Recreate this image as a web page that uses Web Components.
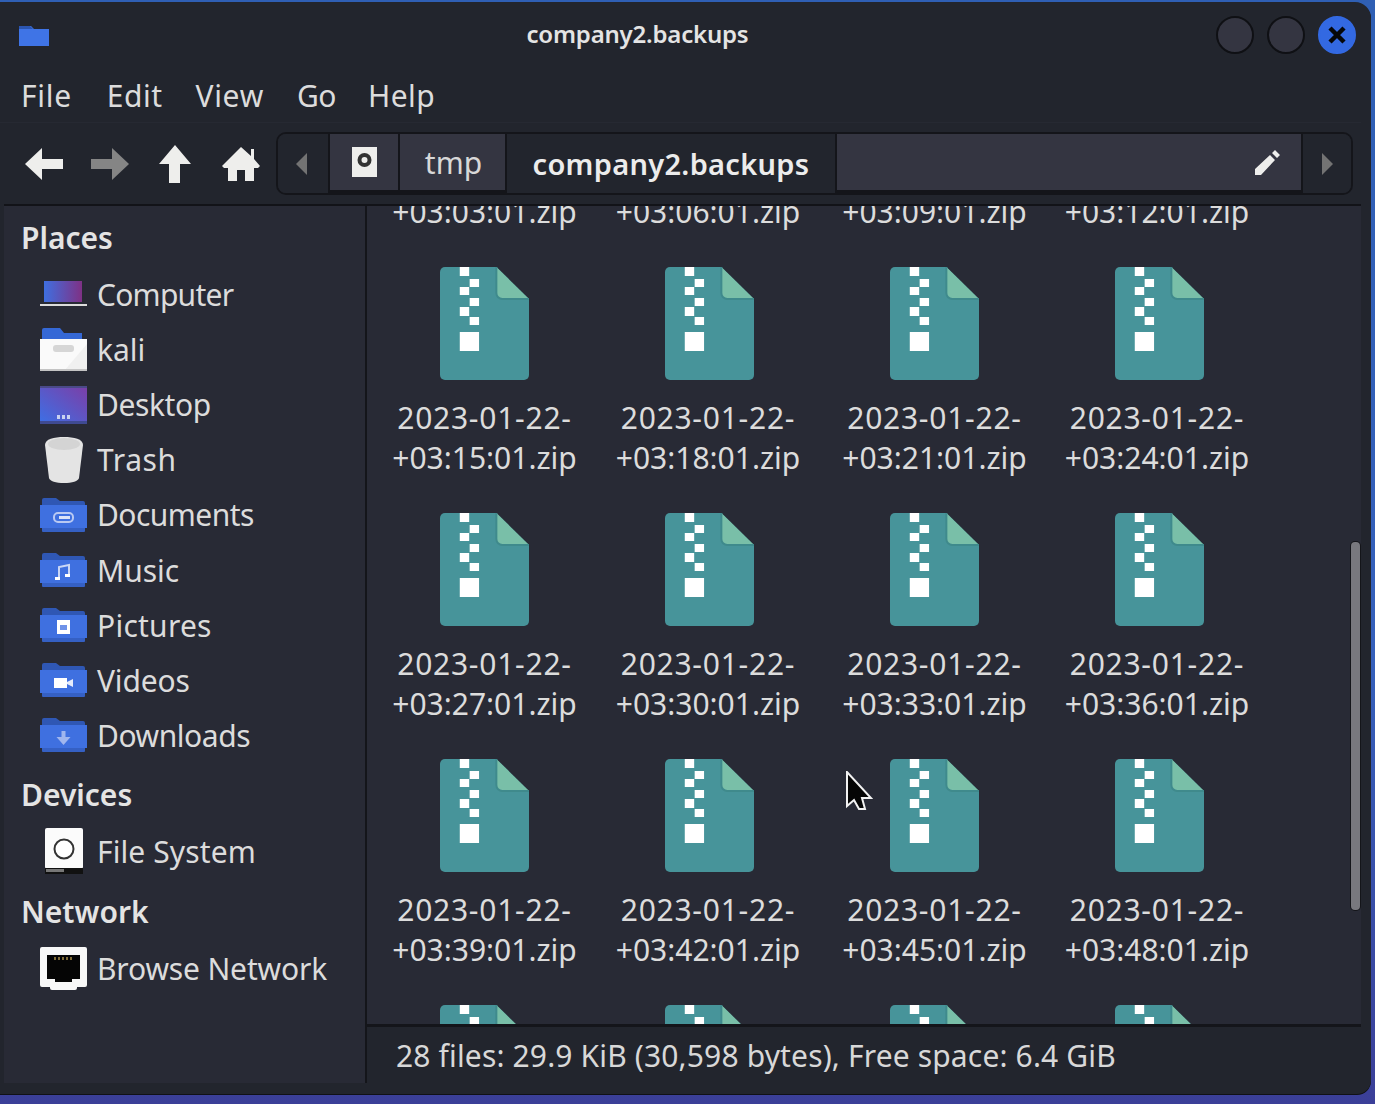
<!DOCTYPE html>
<html>
<head>
<meta charset="utf-8">
<title>company2.backups</title>
<style>
html,body{margin:0;padding:0;height:100%;}
body{
  width:1375px;height:1104px;overflow:hidden;
  background:linear-gradient(180deg,#2f5fb4 0,#3560bb 60%,#3b3f98 100%);
  font-family:"Noto Sans",sans-serif;
  color:#dfdfdf;
}
</style>
</head>
<body>
<fm-window>
  <fm-titlebar slot="top">company2.backups</fm-titlebar>
  <fm-menubar slot="top"></fm-menubar>
  <fm-toolbar slot="top"></fm-toolbar>
  <fm-sidebar slot="side">
    <fm-heading>Places</fm-heading>
    <fm-place icon="computer" style="letter-spacing:-.75px">Computer</fm-place>
    <fm-place icon="home">kali</fm-place>
    <fm-place icon="desktop" style="letter-spacing:-.4px">Desktop</fm-place>
    <fm-place icon="trash" style="letter-spacing:.6px">Trash</fm-place>
    <fm-place icon="documents" style="letter-spacing:-.55px">Documents</fm-place>
    <fm-place icon="music">Music</fm-place>
    <fm-place icon="pictures" style="letter-spacing:.25px">Pictures</fm-place>
    <fm-place icon="videos" style="letter-spacing:-.15px">Videos</fm-place>
    <fm-place icon="downloads" style="letter-spacing:-.45px">Downloads</fm-place>
    <fm-heading>Devices</fm-heading>
    <fm-place icon="disk" style="letter-spacing:.1px">File System</fm-place>
    <fm-heading style="margin-top:13.500px">Network</fm-heading>
    <fm-place icon="network" style="letter-spacing:-.15px">Browse Network</fm-place>
  </fm-sidebar>
  <fm-files slot="main"></fm-files>
  <fm-status slot="main">28 files: 29.9 KiB (30,598 bytes), Free space: 6.4 GiB</fm-status>
</fm-window>

<script>
// folder body shared by the xdg dirs, glyph goes on top
const folder = (glyph) => `<svg width="47" height="34" viewBox="0 0 47 34">
  <path d="M2 2a2 2 0 0 1 2-2h12l4 3h23a2 2 0 0 1 2 2v4H2z" fill="#2f57b4"/>
  <path d="M0 7h47v23H0z" fill="#3f70e0"/>
  <path d="M2 30h43v3a1 1 0 0 1-1 1H3a1 1 0 0 1-1-1z" fill="#3560c4"/>
  ${glyph}</svg>`;

const icons = {
  computer: `<svg width="47" height="27" viewBox="0 0 47 27">
    <defs><linearGradient id="lap" x1="0" x2="1" y1="0" y2="0"><stop offset="0" stop-color="#3f6fe0"/><stop offset="1" stop-color="#7f3185"/></linearGradient></defs>
    <rect x="4" y="0" width="38" height="21" fill="url(#lap)"/>
    <rect x="0" y="23" width="47" height="2" fill="#dcdcdc"/></svg>`,
  home: `<svg width="47" height="43" viewBox="0 0 47 43">
    <path d="M2 2a2 2 0 0 1 2-2h16l4 5h18v8H2z" fill="#3568d6"/>
    <rect x="0" y="11" width="47" height="32" fill="#fafafa"/>
    <path d="M24 43L47 16v27z" fill="#f0f0f0"/>
    <rect x="0" y="41" width="47" height="2" fill="#c4c4c4"/>
    <rect x="13" y="17" width="21" height="7" rx="3" fill="#d6d6d6"/></svg>`,
  desktop: `<svg width="47" height="38" viewBox="0 0 47 38">
    <defs><linearGradient id="desk" x1="0" x2="1" y1="1" y2="0"><stop offset="0" stop-color="#3c70e6"/><stop offset="1" stop-color="#7c3ea6"/></linearGradient></defs>
    <rect width="47" height="38" fill="url(#desk)"/>
    <rect y="0" width="47" height="2" fill="#4a4a88"/>
    <rect y="35" width="47" height="3" fill="#3f4a92"/>
    <path d="M17 29h3v4h-3zM22 29h3v4h-3zM27 29h3v4h-3z" fill="#c9d2f0"/></svg>`,
  trash: `<svg width="38" height="46" viewBox="0 0 38 46">
    <path d="M0 8C0 2 9 0 19 0s19 2 19 8l-4 33c-.5 3-7 5-15 5s-14.500-2-15-5z" fill="#e4e4e4"/>
    <ellipse cx="19" cy="7" rx="16" ry="6" fill="#d4d4d4"/></svg>`,
  documents: folder(`<rect x="14" y="15" width="19" height="9" rx="4" fill="none" stroke="#b9c9f2" stroke-width="2"/><rect x="19" y="18" width="11" height="3" fill="#dbe3f8"/>`),
  music: folder(`<path d="M19 25V14l10-2v10" fill="none" stroke="#c9d6f5" stroke-width="2"/><rect x="15" y="24" width="5" height="3" fill="#fff"/><rect x="25" y="21" width="5" height="3" fill="#fff"/>`),
  pictures: folder(`<rect x="17" y="12" width="13" height="14" fill="#fff"/><rect x="20" y="17" width="7" height="5" fill="#6f92e8"/>`),
  videos: folder(`<rect x="14" y="15" width="13" height="10" fill="#fff"/><path d="M27 19l6-3v8l-6-3z" fill="#e6ecfb"/>`),
  downloads: folder(`<path d="M21.500 13h4v6h5l-7 8-7-8h5z" fill="#a0b6ee"/>`),
  disk: `<svg width="38" height="46" viewBox="0 0 38 46">
    <rect width="38" height="41" rx="2" fill="#fbfbfb"/>
    <rect x="0" y="40" width="38" height="6" fill="#111"/>
    <rect x="1" y="41" width="18" height="3" fill="#777"/>
    <circle cx="19" cy="21" r="9.500" fill="#fff" stroke="#333" stroke-width="2"/></svg>`,
  network: `<svg width="47" height="43" viewBox="0 0 47 43">
    <path d="M2 0h43a2 2 0 0 1 2 2v36a2 2 0 0 1-2 2H37v1a2 2 0 0 1-2 2H12a2 2 0 0 1-2-2v-1H2a2 2 0 0 1-2-2V2a2 2 0 0 1 2-2z" fill="#f8f8f8"/>
    <path d="M7 8h33v24h-8v3H15v-3H7z" fill="#050505"/>
    <path d="M15 10v3M19 10v3M23 10v3M27 10v3M31 10v3" stroke="#a98f48" stroke-width="1.500"/></svg>`
};

class FmWindow extends HTMLElement {
  constructor() {
    super();
    this.attachShadow({ mode: "open" }).innerHTML = `<style>
      :host{
        display:flex;flex-direction:column;
        width:1371px;height:1092px;margin-top:2px;
        background:#22252d;
        border-radius:0 16px 14px 0;
        box-shadow:0 1px 0 #101116;
      }
      .body{display:flex;flex:1;min-height:0;margin:0 10px 11px 4px;}
      .main{display:flex;flex-direction:column;flex:1;min-width:0;position:relative;}
    </style>
    <slot name="top"></slot>
    <div class="body">
      <slot name="side"></slot>
      <div class="main"><slot name="main"></slot></div>
    </div>`;
  }
}

class FmTitlebar extends HTMLElement {
  constructor() {
    super();
    this.attachShadow({ mode: "open" }).innerHTML = `<style>
      :host{display:flex;align-items:center;height:66px;padding:0 15px 0 19px;box-sizing:border-box;}
      svg{flex:none;}
      .title{flex:1;text-align:center;font-size:24px;line-height:30px;margin:-2px 9px 0 32px;font-weight:600;letter-spacing:-.2px;color:#e4e4e4;}
      .btn{flex:none;width:34px;height:34px;border-radius:50%;background:#343541;border:2px solid #0f1014;margin-left:13px;}
      .close{background:#3369e2;border-color:#3369e2;display:flex;align-items:center;justify-content:center;}
    </style>
    <svg width="30" height="22" viewBox="0 0 30 22"><path d="M0 2h12l3 3h15v17H0z" fill="#3f74e6"/><path d="M0 2h11l3 3H0z" fill="#2b55b0"/></svg>
    <div class="title"><slot></slot></div>
    <div class="btn"></div><div class="btn"></div>
    <div class="btn close"><svg width="20" height="20" viewBox="0 0 20 20"><path d="M3 3l14 14M17 3L3 17" stroke="#06070a" stroke-width="4.500"/></svg></div>`;
  }
}

class FmMenubar extends HTMLElement {
  constructor() {
    super();
    this.attachShadow({ mode: "open" }).innerHTML = `<style>
      :host{display:flex;align-items:center;gap:33px;height:55px;padding:0 0 0 21px;box-sizing:border-box;
        border-bottom:1px solid #262932;margin-right:10px;font-size:30px;color:#dcdcdc;}
    </style>
    <span style="letter-spacing:.7px;margin-right:2px">File</span><span style="letter-spacing:.5px">Edit</span><span style="letter-spacing:.7px">View</span><span style="letter-spacing:-.5px;margin-right:-1px">Go</span><span style="letter-spacing:.5px">Help</span>`;
  }
}

class FmToolbar extends HTMLElement {
  constructor() {
    super();
    this.attachShadow({ mode: "open" }).innerHTML = `<style>
      :host{display:flex;align-items:center;height:83px;box-sizing:border-box;margin:0 10px 0 4px;padding-left:7.500px;
        border-bottom:2px solid #121318;}
      .tool{flex:none;width:65.500px;display:flex;align-items:center;justify-content:center;}
      .path{flex:1;display:flex;height:63px;margin-left:2.500px;margin-right:8px;border:2px solid #14151a;border-radius:10px;box-sizing:border-box;overflow:hidden;background:#22252d;}
      .seg{display:flex;align-items:center;justify-content:center;box-sizing:border-box;font-size:30px;background:#343541;border-right:2px solid #14151a;border-bottom:3px solid #14151a;color:#d8d8d8;}
      .end{width:52px;background:#22252d;border-bottom:0;padding-right:4px;}
      .disk{width:70px;}
      .tmp{width:107px;padding-left:2px;}
      .cur{width:330px;background:#22252d;font-weight:600;color:#ececec;font-size:29px;letter-spacing:.3px;border-bottom:0;}
      .fill{flex:1;justify-content:flex-end;padding-right:20px;}
      .next{border-right:0;width:48px;padding:0 0 0 1px;}
    </style>
    <div class="tool"><svg width="38" height="32" viewBox="0 0 38 32"><path d="M0 16L17 0v11h21v10H17v11z" fill="#eeeeec"/></svg></div>
    <div class="tool"><svg width="38" height="32" viewBox="0 0 38 32"><path d="M38 16L21 0v11H0v10h21v11z" fill="#858585"/></svg></div>
    <div class="tool"><svg width="32" height="38" viewBox="0 0 32 38"><path d="M16 0l16 19H21v19H10V19H0z" fill="#eeeeec"/></svg></div>
    <div class="tool"><svg width="38" height="34" viewBox="0 0 38 34"><path d="M19 0l10 9V2h3v10l6 7-2 2H32v13H23V23h-8v11H6V21H2l-2-2z" fill="#eeeeec"/></svg></div>
    <div class="path">
      <div class="seg end"><svg width="11" height="22" viewBox="0 0 11 22"><path d="M11 0v22L0 11z" fill="#737373"/></svg></div>
      <div class="seg disk"><svg width="25" height="30" viewBox="0 0 25 30"><rect width="25" height="30" fill="#eeeeec"/><circle cx="12.500" cy="13" r="7" fill="#333"/><circle cx="12.500" cy="13" r="3" fill="#eeeeec"/></svg></div>
      <div class="seg tmp">tmp</div>
      <div class="seg cur">company2.backups</div>
      <div class="seg fill"><svg width="26" height="26" viewBox="0 0 26 26"><path d="M0 26v-6L15 6l5 5L6 26zM17 4l3-3 5 5-3 3z" fill="#eeeeec"/></svg></div>
      <div class="seg end next"><svg width="11" height="22" viewBox="0 0 11 22"><path d="M0 0v22l11-11z" fill="#737373"/></svg></div>
    </div>`;
  }
}

class FmSidebar extends HTMLElement {
  constructor() {
    super();
    this.attachShadow({ mode: "open" }).innerHTML = `<style>
      :host{display:block;flex:none;width:363px;box-sizing:border-box;background:#282a35;border-right:2px solid #14151a;}
    </style><slot></slot>`;
  }
}

class FmHeading extends HTMLElement {
  constructor() {
    super();
    this.attachShadow({ mode: "open" }).innerHTML = `<style>
      :host{display:block;height:40px;line-height:40px;margin:12.500px 0 8.500px;padding-left:17px;font-size:30px;font-weight:600;color:#e4e4e4;}
      :host(:first-child){margin:11.500px 0 9.500px;}
    </style><slot></slot>`;
  }
}

class FmPlace extends HTMLElement {
  constructor() {
    super();
    const icon = icons[this.getAttribute("icon")] || "";
    this.attachShadow({ mode: "open" }).innerHTML = `<style>
      :host{display:flex;align-items:center;height:55.100px;padding-left:36px;font-size:30px;color:#dcdcdc;}
      .ico{flex:none;width:47px;display:flex;justify-content:center;margin-right:10px;}
    </style><div class="ico">${icon}</div><slot></slot>`;
  }
}

const zipTemplate = document.createElement("template");
zipTemplate.innerHTML = `<svg width="89" height="113" viewBox="0 0 90 113" preserveAspectRatio="none">
  <path d="M5 0H57l33 32v76a5 5 0 0 1-5 5H5a5 5 0 0 1-5-5V5a5 5 0 0 1 5-5z" fill="#47949a"/>
  <path d="M57 0l33 32H63a6 6 0 0 1-6-6z" fill="#79bfa8"/>
  <path d="M57 0v26a6 6 0 0 0 6 6h27" fill="none" stroke="#3f8a8c" stroke-width="2"/>
  <g fill="#fff"><rect x="20" y="0" width="9.500" height="9"/><rect x="30" y="12" width="9.500" height="8"/>
  <rect x="20" y="20" width="9.500" height="8"/><rect x="30" y="31" width="9.500" height="8"/>
  <rect x="20" y="40" width="9.500" height="9"/><rect x="30" y="50" width="9.500" height="8"/>
  <rect x="20" y="65" width="19.500" height="19"/></g></svg>`;

class FmFile extends HTMLElement {
  constructor() {
    super();
    this.attachShadow({ mode: "open" }).innerHTML = `<style>
      :host{display:flex;flex-direction:column;align-items:center;height:246px;}
      svg{flex:none;}
      .label{margin:18px var(--label-shift,0) 0 0;line-height:40px;font-size:30px;text-align:center;color:#dcdcdc;}
      .date{display:block;letter-spacing:.75px;}
    </style><div class="label"><span class="date">${this.getAttribute("date")}</span><slot></slot></div>`;
    this.shadowRoot.insertBefore(zipTemplate.content.cloneNode(true), this.shadowRoot.querySelector(".label"));
  }
}

class FmFiles extends HTMLElement {
  constructor() {
    super();
    const times = ["03:03","03:06","03:09","03:12","03:15","03:18","03:21","03:24","03:27","03:30",
      "03:33","03:36","03:39","03:42","03:45","03:48","03:51","03:54","03:57","04:00"];
    const cells = times.map((t) => `<fm-file date="2023-01-22-">+${t}:01.zip</fm-file>`).join("");
    this.attachShadow({ mode: "open" }).innerHTML = `<style>
      :host{display:block;flex:1;min-height:0;overflow:hidden;position:relative;background:#282a35;}
      .grid{display:grid;grid-template-columns:repeat(4,225px);margin:-185px 0 0 5px;}
      fm-file:nth-child(4n+2){--label-shift:3px;}
      fm-file:nth-child(4n){--label-shift:5px;}
      .thumb{position:absolute;right:1px;top:336px;width:9px;height:368px;background:#78787e;border-radius:4px;box-shadow:0 0 0 1px #14151a;}
      .cursor{position:absolute;left:479px;top:565px;}
    </style>
    <div class="grid">${cells}</div>
    <div class="thumb"></div>
    <svg class="cursor" width="27" height="41" viewBox="0 0 27 41">
      <path d="M1 1V35L8 29L13 38h6L16 27H25z" fill="#050505" stroke="#f2f2f2" stroke-width="2" stroke-linejoin="miter"/>
    </svg>`;
  }
}

class FmStatus extends HTMLElement {
  constructor() {
    super();
    this.attachShadow({ mode: "open" }).innerHTML = `<style>
      :host{display:flex;align-items:center;flex:none;height:59px;box-sizing:border-box;border-top:3px solid #14151a;padding-left:29px;background:#22252d;font-size:30px;letter-spacing:.15px;color:#d8d8d8;}
    </style><slot></slot>`;
  }
}

customElements.define("fm-window", FmWindow);
customElements.define("fm-titlebar", FmTitlebar);
customElements.define("fm-menubar", FmMenubar);
customElements.define("fm-toolbar", FmToolbar);
customElements.define("fm-sidebar", FmSidebar);
customElements.define("fm-heading", FmHeading);
customElements.define("fm-place", FmPlace);
customElements.define("fm-file", FmFile);
customElements.define("fm-files", FmFiles);
customElements.define("fm-status", FmStatus);
</script>
</body>
</html>
